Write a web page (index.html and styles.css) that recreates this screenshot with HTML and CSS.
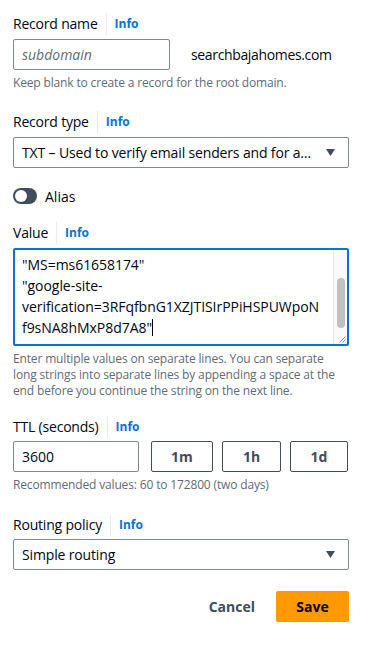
FILE: index.html
```html
<!DOCTYPE html>
<html>
<head>
<meta charset="utf-8">
<link rel="stylesheet" href="styles.css">
</head>
<body>
<form class="form">
  <div class="field f-name">
    <div class="label-row"><span class="label">Record name</span><span class="info">Info</span></div>
    <div class="name-row">
      <div class="input name-input"><span class="placeholder">subdomain</span></div>
      <span class="domain">searchbajahomes.com</span>
    </div>
    <div class="hint">Keep blank to create a record for the root domain.</div>
  </div>

  <div class="field f-type">
    <div class="label-row"><span class="label">Record type</span><span class="info">Info</span></div>
    <div class="select">
      <span class="select-text">TXT – Used to verify email senders and for a…</span>
      <svg class="caret" width="9" height="7" viewBox="0 0 9 7"><path d="M0 0H9L4.5 7Z" fill="#414d5c"/></svg>
    </div>
  </div>

  <div class="toggle-row">
    <span class="toggle"><span class="knob"></span></span>
    <span class="toggle-label">Alias</span>
  </div>

  <div class="field f-value">
    <div class="label-row"><span class="label">Value</span><span class="info">Info</span></div>
    <div class="textarea">
      <div class="ta-text">
        <div>"MS=ms61658174"</div>
        <div>"google-site-</div>
        <div>verification=3RFqfbnG1XZJTISIrPPiHSPUWpoN</div>
        <div>f9sNA8hMxP8d7A8"<span class="cursor"></span></div>
      </div>
      <div class="scrollbar"><span class="thumb"></span></div>
      <svg class="grip" width="8" height="8" viewBox="0 0 8 8"><path d="M7.5 1.5L1.5 7.5M7.5 4.5L4.5 7.5" stroke="#8a8a8a" stroke-width="1"/></svg>
    </div>
    <div class="hint multi">Enter multiple values on separate lines. You can separate long strings into separate lines by appending a space at the end before you continue the string on the next line.</div>
  </div>

  <div class="field f-ttl">
    <div class="label-row"><span class="label">TTL (seconds)</span><span class="info">Info</span></div>
    <div class="ttl-row">
      <div class="input ttl-input">3600</div>
      <button type="button" class="ttl-btn b1m">1m</button>
      <button type="button" class="ttl-btn b1h">1h</button>
      <button type="button" class="ttl-btn b1d">1d</button>
    </div>
    <div class="hint">Recommended values: 60 to 172800 (two days)</div>
  </div>

  <div class="field f-routing">
    <div class="label-row"><span class="label">Routing policy</span><span class="info">Info</span></div>
    <div class="select">
      <span class="select-text">Simple routing</span>
      <svg class="caret" width="9" height="7" viewBox="0 0 9 7"><path d="M0 0H9L4.5 7Z" fill="#414d5c"/></svg>
    </div>
  </div>

  <div class="actions">
    <button type="button" class="cancel">Cancel</button>
    <button type="button" class="save">Save</button>
  </div>
</form>
</body>
</html>
```

FILE: styles.css
```css
* { box-sizing: border-box; }
html, body { margin: 0; padding: 0; background: #ffffff; }
body {
  font-family: "Open Sans", "Noto Sans", Arial, sans-serif;
  color: #000716;
  font-size: 14px;
  width: 369px;
  height: 654px;
  overflow: hidden;
}
.form {
  padding: 13px 20px 0 13px;
  display: flex;
  flex-direction: column;
}
.label-row {
  display: flex;
  align-items: center;
  height: 22px;
  margin-bottom: 4px;
}
.label {
  font-size: 14px;
  line-height: 22px;
  padding-right: 8px;
  border-right: 1px solid #e9ebed;
  letter-spacing: -0.2px;
}
.info {
  font-size: 12px;
  font-weight: 700;
  color: #0972d3;
  padding-left: 8px;
  line-height: 22px;
}
.input {
  height: 31px;
  border: 1px solid #7d8998;
  border-radius: 2px;
  padding: 0 8px;
  display: flex;
  align-items: center;
  font-size: 14px;
}
.name-row {
  display: flex;
  align-items: center;
}
.name-input { width: 157px; }
.placeholder { font-style: italic; color: #5f6b7a; }
.domain {
  margin-left: 21px;
  font-size: 14px;
  letter-spacing: -0.35px;
}
.hint {
  font-size: 12px;
  line-height: 16px;
  color: #5f6b7a;
  margin-top: 5px;
  letter-spacing: -0.15px;
}
.f-type { margin-top: 20px; }
.select {
  height: 31px;
  border: 1px solid #7d8998;
  border-radius: 2px;
  padding: 0 13px 0 8px;
  display: flex;
  align-items: center;
  justify-content: space-between;
}
.select-text { font-size: 14px; white-space: nowrap; letter-spacing: -0.15px; }
.toggle-row {
  margin-top: 20px;
  display: flex;
  align-items: center;
  height: 16px;
}
.toggle {
  width: 24px;
  height: 16px;
  border-radius: 8px;
  background: #414d5c;
  display: flex;
  align-items: center;
  padding-left: 2px;
}
.knob {
  width: 12px;
  height: 12px;
  border-radius: 50%;
  background: #ffffff;
}
.toggle-label { margin-left: 8px; font-size: 14px; }
.f-value { margin-top: 18px; }
.textarea {
  position: relative;
  height: 98px;
  border: 2px solid #0972d3;
  border-radius: 2px;
  display: flex;
  overflow: hidden;
}
.ta-text {
  flex: 1;
  padding: 4px 0 0 7px;
  font-size: 14px;
  line-height: 21px;
  white-space: nowrap;
  overflow: hidden;
  letter-spacing: -0.05px;
}
.cursor {
  display: inline-block;
  width: 1px;
  height: 17px;
  background: #000716;
  vertical-align: -3px;
}
.scrollbar {
  width: 14px;
  background: #fafafa;
  border-left: 1px solid #e8e8e8;
  display: flex;
  justify-content: center;
  padding-top: 28px;
}
.thumb {
  width: 8px;
  height: 50px;
  border-radius: 4px;
  background: #c1c1c1;
}
.grip {
  position: absolute;
  right: 1px;
  bottom: 1px;
}
.multi { margin-top: 5px; }
.f-ttl { margin-top: 17px; }
.f-ttl .label-row { margin-bottom: 3px; }
.ttl-row {
  display: flex;
  gap: 9px;
}
.ttl-input { width: 126px; margin-right: 3px; }
.ttl-btn {
  height: 31px;
  border: 1px solid #414d5c;
  border-radius: 2px;
  background: #ffffff;
  font-family: inherit;
  font-size: 14px;
  font-weight: 700;
  color: #414d5c;
  padding: 0;
}
.b1m { width: 62px; }
.b1h { width: 59px; }
.b1d { width: 58px; }
.f-routing { margin-top: 21px; }
.f-routing .label-row { margin-bottom: 3px; }
.actions {
  margin-top: 21px;
  display: flex;
  justify-content: flex-end;
  align-items: center;
}
.cancel {
  border: none;
  background: none;
  font-family: inherit;
  font-size: 14px;
  font-weight: 700;
  color: #414d5c;
  padding: 0;
  margin-right: 21px;
}
.save {
  width: 73px;
  height: 31px;
  border: none;
  border-radius: 2px;
  background: #ff9900;
  font-family: inherit;
  font-size: 14px;
  font-weight: 700;
  color: #000716;
}
```
